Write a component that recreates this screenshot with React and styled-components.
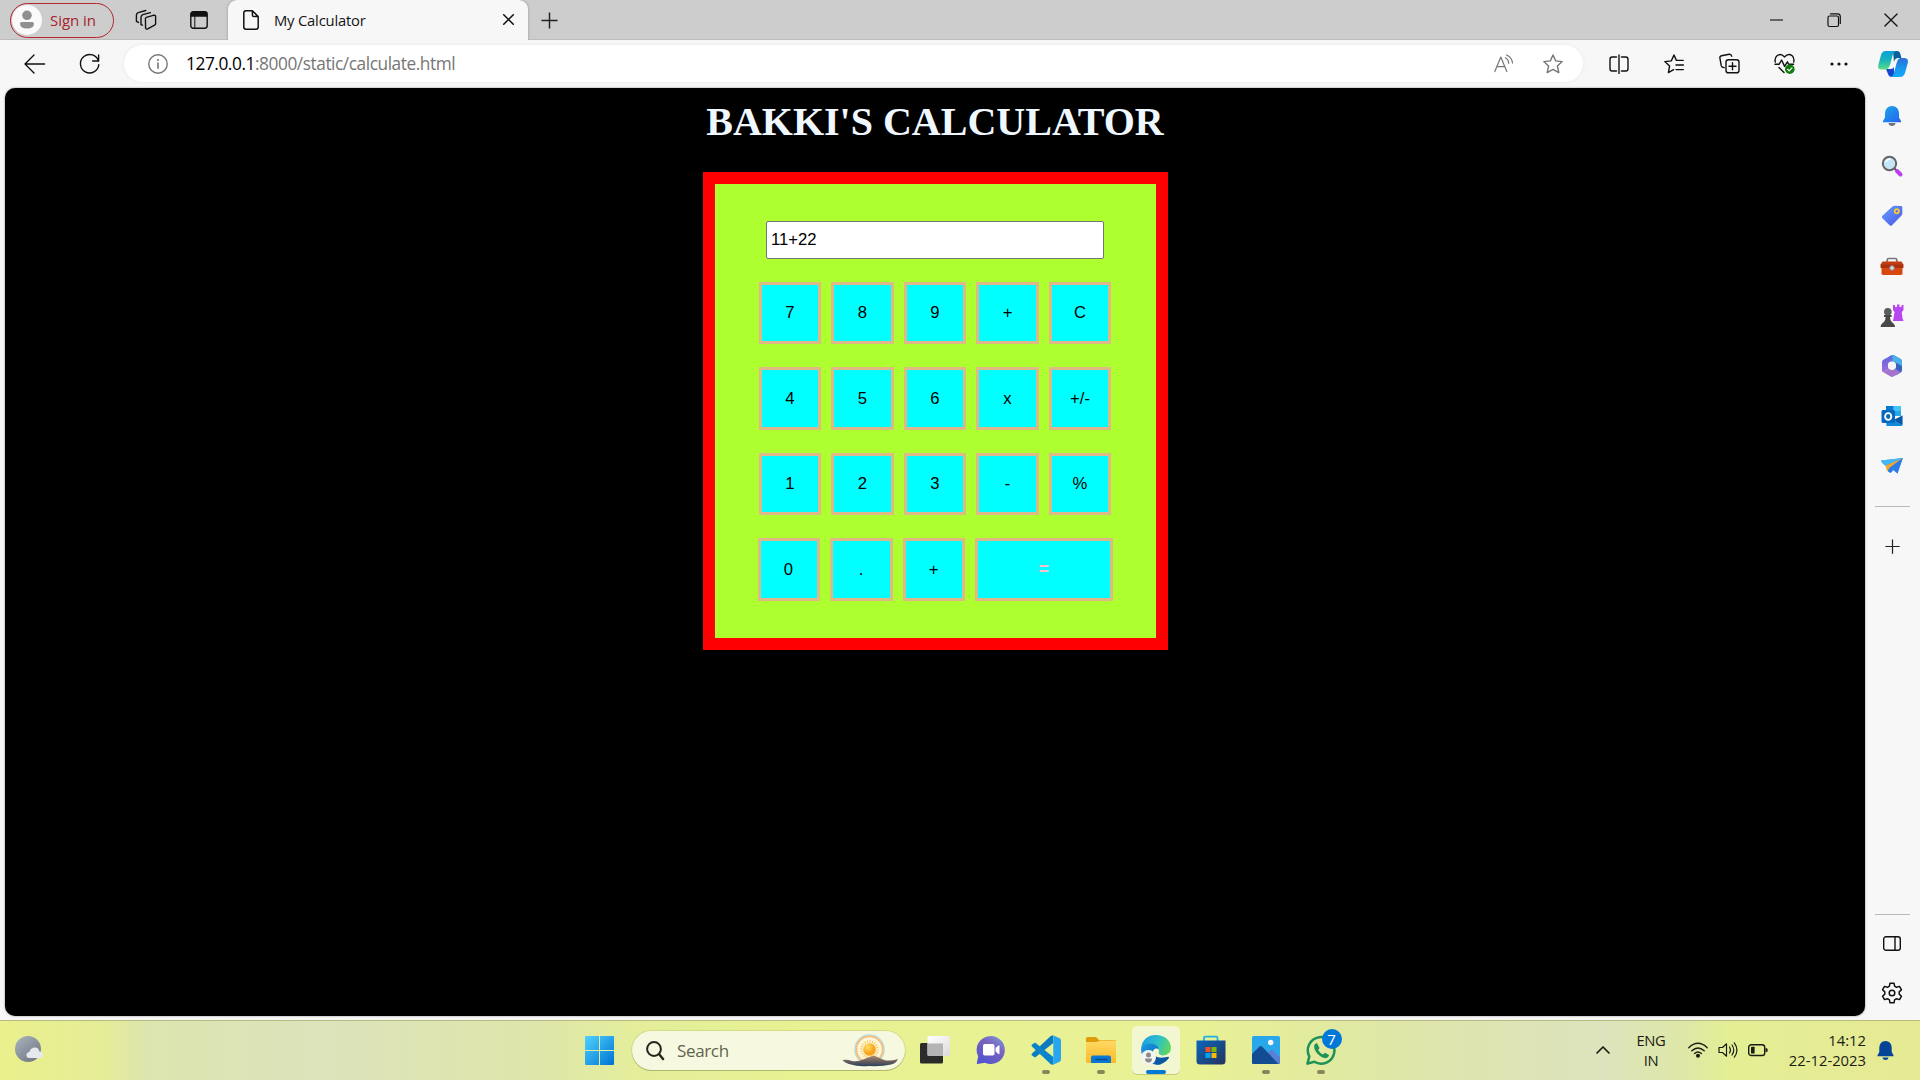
import React, { useState } from "react";
import styled, { createGlobalStyle } from "styled-components";

const GlobalStyle = createGlobalStyle`
  * { box-sizing: border-box; }
  html, body { margin: 0; padding: 0; }
  body { overflow: hidden; background: #f7f7f7; font-family: "Open Sans", "Noto Sans", sans-serif; }
`;

const Desktop = styled.div`
  width: 1920px;
  height: 1080px;
  display: flex;
  flex-direction: column;
  overflow: hidden;
  background: #f7f7f7;
`;

const TitleBar = styled.header`
  flex: none;
  height: 40px;
  display: flex;
  align-items: stretch;
  background: #cdcdcd;
  box-shadow: inset 0 -1px 0 #bdbdbd;
`;

const ProfileButton = styled.button`
  width: 104px;
  height: 35px;
  margin: 2.5px 0 0 10px;
  padding: 0 0 1px 1px;
  display: flex;
  align-items: center;
  gap: 8px;
  border: 1.5px solid #b3262d;
  border-radius: 18px;
  background: transparent;
  color: #a5262c;
  font: 15px "Open Sans", sans-serif;
  letter-spacing: -0.05px;
  white-space: nowrap;
`;

const IconSlot = styled.div`
  flex: none;
  width: ${(p) => p.$w}px;
  margin-left: ${(p) => p.$ml || 0}px;
  display: flex;
  align-items: center;
  justify-content: center;
`;

const Svg = styled.svg`
  display: block;
  flex: none;
  overflow: visible;
`;

const Tab = styled.div`
  width: 300px;
  height: 40px;
  margin-left: 17px;
  padding: 0 13px 1px 15px;
  display: flex;
  align-items: center;
  border-radius: 9px 9px 0 0;
  background: #f7f7f7;
  box-shadow: 0 0 3px rgba(0, 0, 0, 0.28);
  clip-path: inset(0 -4px 0 -4px);
`;

const TabTitle = styled.span`
  flex: 1;
  margin-left: 15px;
  font-size: 14.8px;
  letter-spacing: -0.2px;
  color: #151515;
`;

const WindowControls = styled.div`
  margin-left: auto;
  display: flex;
`;

const Toolbar = styled.nav`
  flex: none;
  height: 48px;
  display: flex;
  align-items: center;
  padding: 0 0 1px 7px;
  background: #f7f7f7;
`;

const AddressBar = styled.div`
  width: 1460px;
  height: 37px;
  margin-left: 7px;
  display: flex;
  align-items: center;
  border-radius: 19px;
  background: #fff;
  box-shadow: 0 0 4px rgba(0, 0, 0, 0.06);
`;

const Url = styled.span`
  flex: 1;
  margin-left: 18px;
  font-size: 17.3px;
  letter-spacing: -0.44px;
  color: #767676;
  white-space: nowrap;
  b { font-weight: 400; color: #000; }
`;

const Body = styled.div`
  flex: 1;
  min-height: 0;
  display: flex;
`;

const Page = styled.main`
  width: 1860px;
  margin: 0 0 4px 5px;
  display: flex;
  flex-direction: column;
  align-items: center;
  border-radius: 10px;
  background: #000;
  box-shadow: 0 0 2px rgba(0, 0, 0, 0.5);
`;

const Heading = styled.h1`
  margin: 11px 0 27px;
  font: bold 40px/46px "Liberation Serif", "Times New Roman", serif;
  color: aliceblue;
`;

const Calculator = styled.section`
  width: 465px;
  height: 478px;
  padding-top: 37px;
  border: 12px solid #f00;
  background: greenyellow;
  display: flex;
  flex-direction: column;
  align-items: center;
`;

const Display = styled.input`
  width: 338px;
  height: 38px;
  margin-bottom: 23px;
  padding: 0 0 0 4px;
  border: 1px solid #767676;
  border-radius: 2px;
  background: #fff;
  color: #000;
  font: 16.67px "Liberation Sans", Arial, sans-serif;
  outline: none;
`;

const KeyPad = styled.div`
  display: grid;
  grid-template-rows: 62px 63px 62px 63px;
  row-gap: 23px;
  justify-items: center;
`;

const KeyRow = styled.div`
  display: grid;
  grid-template-columns: ${(p) => (p.$last ? "62px 63px 62px 138px" : "62px 63px 62px 63px 62px")};
  column-gap: 10px;
`;

const Key = styled.button`
  padding: 0;
  border: 3px solid burlywood;
  background: cyan;
  color: ${(p) => (p.$equals ? "pink" : "#000")};
  font: ${(p) => (p.$equals ? "bold 17.5px" : "normal 16.67px")} "Liberation Sans", Arial, sans-serif;
`;

const Sidebar = styled.aside`
  width: 55px;
  padding: 13px 1px 12px 0;
  display: flex;
  flex-direction: column;
  align-items: center;
`;

const SideItem = styled.div`
  width: 30px;
  height: 30px;
  margin-bottom: ${(p) => (p.$last ? 0 : 20)}px;
  display: flex;
  align-items: center;
  justify-content: center;
`;

const Divider = styled.div`
  width: 35px;
  height: 1px;
  background: #bababa;
  margin: ${(p) => p.$m};
`;

const Taskbar = styled.footer`
  flex: none;
  height: 60px;
  padding-bottom: 1px;
  display: flex;
  align-items: center;
  border-top: 1px solid #b6bc80;
  background: linear-gradient(90deg, #eaf08c 0, #e5ed96 100px, #dde5b0 150px, #dde3bb 320px, #dfe6aa 540px,
    #e4ee9a 640px, #e8f292 800px, #e8f194 1200px, #e1eaa0 1330px, #dfe5ae 1450px, #dde3bd 1600px,
    #dfe8a6 1690px, #e4ef94 1730px, #e6e994 1920px);
`;

const SearchBox = styled.div`
  width: 273px;
  height: 39px;
  margin: 0 4px 0 17.5px;
  padding: 0 7px 0 14px;
  display: flex;
  align-items: center;
  border-radius: 20px;
  background: #f6f9df;
  box-shadow: 0 0 0 1px rgba(150, 165, 90, 0.25), 0 1px 0 rgba(110, 120, 60, 0.4);
  color: #61634f;
  font-size: 17px;
  letter-spacing: -0.35px;
`;

const SearchLabel = styled.span`
  flex: 1;
  margin-left: 13px;
`;

const AppSlot = styled.div`
  position: relative;
  width: 48px;
  height: 48px;
  margin: 0 ${(p) => (p.$first ? 4 : 3.5)}px 0 ${(p) => (p.$first ? 2 : 3.5)}px;
  display: flex;
  align-items: center;
  justify-content: center;
  border-radius: 5px;
  background: ${(p) => (p.$active ? "#f3f7d1" : "transparent")};
  box-shadow: ${(p) => (p.$active ? "0 1px 0 rgba(110,120,60,.3)" : "none")};
  &::after {
    content: "";
    display: ${(p) => (p.$running || p.$active ? "block" : "none")};
    position: absolute;
    bottom: 0;
    left: calc(50% - ${(p) => (p.$active ? 10 : 4)}px);
    width: ${(p) => (p.$active ? 20 : 8)}px;
    height: 4px;
    border-radius: 2px;
    background: ${(p) => (p.$active ? "#0078d4" : "#86885c")};
  }
`;

const Badge = styled.span`
  position: absolute;
  left: 25px;
  top: 3px;
  width: 20px;
  height: 20px;
  border-radius: 50%;
  display: flex;
  align-items: center;
  justify-content: center;
  background: #0078d7;
  color: #fff;
  font-size: 15px;
  line-height: 1;
`;

const Tray = styled.div`
  margin-left: auto;
  height: 100%;
  display: flex;
  align-items: center;
  color: #1b1c14;
`;

const TrayText = styled.div`
  width: ${(p) => p.$w}px;
  margin-left: ${(p) => p.$ml}px;
  text-align: ${(p) => p.$align};
  font-size: 14.8px;
  line-height: 20px;
  letter-spacing: ${(p) => p.$ls || 0}px;
  white-space: nowrap;
`;

const Pic = ({ w, h = w, children, vb, ...rest }) => (
  <Svg width={w} height={h} viewBox={vb || `0 0 ${w} ${h}`} fill="none" {...rest}>{children}</Svg>
);
const line = { stroke: "#111", strokeWidth: 1.4, strokeLinecap: "round", strokeLinejoin: "round" };
const gray = { ...line, stroke: "#767676" };

const Avatar = () => (
  <Pic w={30}>
    <circle cx="15" cy="15" r="15" fill="#fafafa" />
    <circle cx="15" cy="10.3" r="4.8" fill="#909090" />
    <path d="M8 18.6Q8 17 9.6 17H20.4Q22 17 22 18.6Q22 23.6 15 23.6Q8 23.6 8 18.6Z" fill="#909090" />
  </Pic>
);

const Workspaces = () => (
  <Pic w={22} {...line}>
    <path d="M10.4 9.6Q10.6 8.7 11.4 8.4L18.2 6.3Q20.6 5.8 20.6 7.6V14.8Q20.5 15.7 19.6 16.1L12.7 19.9Q10.9 20.6 10.6 18.8Z" />
    <path d="M7.4 16.2L6 15.7V8.3Q6.2 6.3 7.8 5.6L15.4 3.6" />
    <path d="M3.5 13.4L1.4 12.3V6.1Q1.4 4.3 3.2 3.6L10.8 1.5" />
  </Pic>
);

const TabActions = () => (
  <Pic w={18}>
    <rect x=".8" y=".8" width="16.4" height="16.4" rx="2.4" {...line} />
    <path d="M.8 5.8V3Q.8.8 3 .8H15Q17.2.8 17.2 3V5.8Z" fill="#111" />
    <path d="M4.8 5V17" {...line} strokeWidth="1" />
  </Pic>
);

const FileIcon = () => (
  <Pic w={16} h={20} {...line} strokeWidth="1.5">
    <path d="M9.4.8H3Q.8.8.8 3V17Q.8 19.2 3 19.2H13Q15.2 19.2 15.2 17V6.6ZM9.4.8V5Q9.4 6.6 11 6.6H15.2" />
  </Pic>
);

const Cross = ({ s, sw = 1.3 }) => (
  <Pic w={s} vb="0 0 12 12"><path d="M.8.8L11.2 11.2M11.2.8L.8 11.2" {...line} strokeWidth={sw} /></Pic>
);
const Plus = ({ s, sw = 1.3 }) => (
  <Pic w={s} vb="0 0 16 16"><path d="M8 .4V15.6M.4 8H15.6" stroke="#222" strokeWidth={sw} /></Pic>
);

const Back = () => <Pic w={22} h={20} {...line}><path d="M1 10H20.6M10 1L1 10L10 19" /></Pic>;
const Reload = () => <Pic w={21} {...line}><path d="M19.5 8.2A9.2 9.2 0 1 0 19.8 11.6M19.6 2V8H13.6" /></Pic>;
const Info = () => (
  <Pic w={20}>
    <circle cx="10" cy="10" r="9.2" {...gray} />
    <path d="M10 9V14.2" {...gray} strokeWidth="1.6" /><circle cx="10" cy="6" r="1.1" fill="#767676" />
  </Pic>
);
const ReadAloud = () => (
  <Pic w={20} h={19} {...gray} strokeWidth="1.2">
    <path d="M.8 17.6L6.8 3L12.8 17.6M3 12.6H10.6" />
    <path d="M11.4 3.8Q14.4 5.2 14.8 9.2M12.4 1Q17.8 3 18.6 9" />
  </Pic>
);
const Star = () => (
  <Pic w={20} {...gray}><path d="M10 1L12.7 6.9L19.2 7.6L14.4 12L15.8 18.6L10 15.4L4.2 18.6L5.6 12L.8 7.6L7.3 6.9Z" /></Pic>
);
const Split = () => (
  <Pic w={20} {...line}><path d="M7.5 3H3.2Q1 3 1 5.2V14.8Q1 17 3.2 17H7.5M12.5 3H16.8Q19 3 19 5.2V14.8Q19 17 16.8 17H12.5M10 1V19.4" /></Pic>
);
const Favs = () => (
  <Pic w={20} {...line}><path d="M19.2 6.4H12.4L10 1L7.3 6.9L.8 7.6L5.6 12L4.4 18.6L9.6 15.6M12 11H19.4M12 15.6H19.4" /></Pic>
);
const Collections = () => (
  <Pic w={21} {...line}>
    <path d="M5.2 14.6L3.6 14.3Q2.5 13.8 2.3 12.9L.9 5.1Q.6 3.2 2.5 2.7L10.2 1.2Q12.2 1 12.7 3.2" />
    <rect x="7" y="6.8" width="13" height="13" rx="2.4" /><path d="M13.5 9.8V16.8M10 13.3H17" />
  </Pic>
);
const Heart = () => (
  <Pic w={21} {...line}>
    <path d="M1.3 9Q.3 5.2 3 2.7Q7-.3 10.4 3.9Q14.4-.3 18.2 2.7Q20.6 5.2 19.7 9" />
    <path d="M1 11.2H5.2L7.6 7L10.6 13.4L13.4 8.8L14.6 11.2H19.6M5 14.6L10 19.4" />
    <circle cx="15.8" cy="16.2" r="4.8" fill="#107c10" stroke="none" />
    <path d="M13.7 16.4L15.2 17.8L18 14.9" stroke="#fff" strokeWidth="1.2" />
  </Pic>
);
const Dots = () => <Pic w={18} h={4}><circle cx="2" cy="2" r="1.6" fill="#111" /><circle cx="9" cy="2" r="1.6" fill="#111" /><circle cx="16" cy="2" r="1.6" fill="#111" /></Pic>;

const Copilot = () => (
  <Pic w={30} h={28}>
    <defs>
      <linearGradient id="cpA" x1="0" y1="0" x2="0" y2="1"><stop offset="0" stopColor="#0a9fdc" /><stop offset=".5" stopColor="#17b5b9" /><stop offset="1" stopColor="#5ddc88" /></linearGradient>
      <linearGradient id="cpB" x1="0" y1="0" x2="0" y2="1"><stop offset="0" stopColor="#2b6fd8" /><stop offset=".6" stopColor="#159bf0" /><stop offset="1" stopColor="#13a9f7" /></linearGradient>
    </defs>
    <path d="M15 1H19Q21.6 1 22.4 4L23.4 8H20Q17 8 16 12Z" fill="#0a5f9c" />
    <path d="M8 19H13Q15 19 15.6 17L17 27H14Q11 27 10 24Z" fill="#1746d1" />
    <path d="M7.500 1H18Q15.600 2 14.700 5L12.300 14Q10.800 19.500 7 19.500H3.500Q-.6 19.500.2 15.500L3 5Q4.300 1 7.500 1Z" fill="url(#cpA)" />
    <path d="M22 8H26.500Q30.600 8.300 29.900 12.500L27 23Q25.600 27 22.200 27H12.500Q15.200 26 16 23L18.600 13Q19.600 9 22 8Z" fill="url(#cpB)" />
  </Pic>
);
const BellBlue = () => (
  <Pic w={20} h={22}>
    <defs><linearGradient id="bell" x1="0" y1="0" x2="1" y2="1"><stop offset="0" stopColor="#1fa9dd" /><stop offset=".5" stopColor="#1f85f0" /><stop offset="1" stopColor="#2a63e8" /></linearGradient></defs>
    <path d="M6.400 18H13.600Q13 21 10 21Q7 21 6.400 18Z" fill="#6d7480" />
    <path d="M10 1Q16.500 1.300 17 8V12.500L19 16V17.200H1V16L3 12.500V8Q3.500 1.300 10 1Z" fill="url(#bell)" />
  </Pic>
);
const Loupe = () => (
  <Pic w={22}>
    <path d="M13.500 13.500L16 16" stroke="#555" strokeWidth="2" /><path d="M16 16L19.500 19.500" stroke="#bd3df0" strokeWidth="4" strokeLinecap="round" />
    <circle cx="8.500" cy="8.500" r="6.700" fill="#c5e6fa" stroke="#646464" strokeWidth="2" />
    <path d="M4.600 7Q6 4 9.600 4" stroke="#fff" strokeWidth="1.400" />
  </Pic>
);
const Tag = () => (
  <Pic w={22}>
    <defs><linearGradient id="tag" x1="0" y1="0" x2="1" y2="1"><stop offset="0" stopColor="#6aa0ff" /><stop offset="1" stopColor="#4455e8" /></linearGradient></defs>
    <path d="M11.500 1.500Q12.300.8 13.500.8L20 1Q21.300 1 21.300 2.400V8.400Q21.300 9.600 20.500 10.400L11 20.200Q9.800 21.300 8.600 20.200L1.400 13.300Q.2 12 1.400 10.800Z" fill="url(#tag)" />
    <circle cx="15.800" cy="6.200" r="2.100" stroke="#ffc928" strokeWidth="1.700" />
  </Pic>
);
const Toolbox = () => (
  <Pic w={24} h={20}>
    <path d="M7.200 6V4Q7.200 2.500 8.700 2.500H15.300Q16.800 2.500 16.800 4V6" stroke="#777" strokeWidth="1.700" />
    <rect x="1.500" y="11" width="21" height="8" rx="1.400" fill="#d9480f" /><path d="M2.500 5.500H21.500L23.300 8.500V11.500H.7V8.500Z" fill="#c43d10" />
    <path d="M.7 8.500H23.300V12H.7Z" fill="#a93210" /><circle cx="12" cy="12" r="2.300" fill="#d8d8d8" stroke="#8b8b8b" />
  </Pic>
);
const Chess = () => (
  <Pic w={24}>
    <path d="M13 1H15V3H17V.600H19.500V3H21.500V1H23.500V6L21.800 8L22.400 14L23.600 17H13L14.600 8L13 6Z" fill="#b847f0" />
    <circle cx="7.800" cy="7.700" r="3.800" fill="#5c5c5c" />
    <path d="M4 11H11.600V13H10Q10 17 13.500 19.500Q15 20.500 15 23H.6Q.6 20.500 2.100 19.500Q5.600 17 5.600 13H4Z" fill="#484848" />
  </Pic>
);
const M365 = () => (
  <Pic w={22} h={24}>
    <defs><linearGradient id="m3" x1="0" y1="0" x2="0" y2="1"><stop offset="0" stopColor="#5a6ae0" /><stop offset="1" stopColor="#a66ad9" /></linearGradient></defs>
    <path d="M10.500 1.200Q11.700.6 13 1.200L19.700 5Q21 5.800 21 7.300V16.200Q21 17.700 19.700 18.500L15 21.300L14 15.500L15 10L7 8Z" fill="#3763bd" />
    <path d="M8 2.600L10.500 1.200Q11.700.6 13 1.200L19.700 5Q21 5.800 21 7.300V12L14.500 8.600L8 8Z" fill="#48b1ea" />
    <path d="M10.500 1.200L2.300 5.700Q1 6.400 1 8V16.200Q1 17.500 2.300 18.300L7.800 14.500L7.500 9.500Q8 7.500 11.500 7.600V2.600Z" fill="url(#m3)" />
    <path d="M2.300 18.300L10 22.700Q11 23.300 12.500 22.600L19.800 18.400L14.400 14.600Q11 17 7.600 14.400Z" fill="#a374cd" />
    <circle cx="11" cy="11.700" r="4.100" fill="#f7f7f7" />
  </Pic>
);
const Outlook = () => (
  <Pic w={22}>
    <path d="M5 2Q5 1 6 1H19Q20 1 20 2V11H5Z" fill="#28a8ea" /><path d="M5 1H12.500V6H5Z" fill="#0a78cf" /><path d="M12.500 1H20V6H12.500Z" fill="#45c3f5" />
    <path d="M4.500 10.500L13 16L21.400 10.500V19.500Q21.400 21 20 21H5.500Z" fill="#1688d8" /><path d="M21.400 10.500V20L13 14.800Z" fill="#0a57a5" />
    <rect x=".5" y="5" width="13.500" height="13" rx="1.500" fill="#0868bd" /><ellipse cx="7.200" cy="11.500" rx="3.100" ry="3.400" stroke="#fff" strokeWidth="1.900" />
  </Pic>
);
const Plane = () => (
  <Pic w={24} h={20}>
    <path d="M1 4.500L22.800 2L17.500 17.400L13.600 14.200L10.500 17L8.400 12.500L1.800 6.500Z" fill="#399cf0" />
    <path d="M22.800 2L7.700 11L8.200 15.800L10.600 17L13.200 13.600L17.500 17.400Z" fill="#2d7ce5" />
    <path d="M22.500 2L5.600 9.600L7 15.500L9.600 11.800Z" fill="#f2a72c" /><path d="M1 4.500L22.500 2L5.600 9.600Z" fill="#45b8f7" />
  </Pic>
);
const PanelIcon = () => <Pic w={18} h={15} {...line}><rect x=".7" y=".7" width="16.600" height="13.600" rx="2.300" /><path d="M12 1V14" /></Pic>;
const Gear = () => (
  <Pic w={22} {...line} strokeWidth="1.5">
    <path d="M9 1.200H13L13.600 4.200L15.500 5.300L18.500 4.400L20.500 7.800L18.200 9.900V12.100L20.500 14.200L18.500 17.600L15.500 16.700L13.600 17.800L13 20.800H9L8.400 17.800L6.500 16.700L3.500 17.600L1.500 14.200L3.800 12.100V9.900L1.500 7.800L3.500 4.400L6.500 5.300L8.400 4.200Z" />
    <circle cx="11" cy="11" r="2.800" />
  </Pic>
);

const Weather = () => (
  <Pic w={30}>
    <defs><linearGradient id="moon" x1="0" y1="0" x2=".8" y2="1"><stop stopColor="#abb5bd" /><stop offset="1" stopColor="#6f7884" /></linearGradient></defs>
    <circle cx="14" cy="14" r="13" fill="url(#moon)" />
    <path d="M15.300 23Q12.400 23 12.400 20Q12.600 17.300 15.400 17Q16.600 12.700 21 12.600Q24.600 12.700 25.400 16.400Q29 16.800 29 19.800Q28.600 23 25.400 23Z" fill="#e6e9ee" />
  </Pic>
);
const Windows = () => (
  <Pic w={29}>
    <defs><linearGradient id="win" x1="0" y1="0" x2="1" y2="1"><stop stopColor="#4fd3ff" /><stop offset="1" stopColor="#0072d2" /></linearGradient></defs>
    <path d="M1 0H14V14H0V1Q0 0 1 0ZM15 0H28Q29 0 29 1V14H15ZM0 15H14V29H1Q0 29 0 28ZM15 15H29V28Q29 29 28 29H15Z" fill="url(#win)" />
  </Pic>
);
const SearchGlass = () => <Pic w={18} h={19}><circle cx="8" cy="8" r="6.900" stroke="#24261e" strokeWidth="2" /><path d="M13 13L17 18" stroke="#24261e" strokeWidth="2.400" strokeLinecap="round" /></Pic>;
const SunHills = () => (
  <Pic w={56} h={34}>
    <defs>
      <linearGradient id="hill" x1="0" y1="0" x2="0" y2="1"><stop stopColor="#b18872" /><stop offset=".5" stopColor="#6e625e" /><stop offset="1" stopColor="#29405c" /></linearGradient>
      <radialGradient id="sun" cx=".35" cy=".3"><stop stopColor="#ffe169" /><stop offset="1" stopColor="#f7a51e" /></radialGradient>
    </defs>
    <circle cx="27.500" cy="16.500" r="14.500" stroke="#b7dce0" strokeWidth="1.500" /><circle cx="27.500" cy="16.500" r="13.200" stroke="#f6be7b" strokeWidth="1.800" fill="#fdf5da" />
    <circle cx="27.500" cy="16.500" r="8" stroke="#f8c64c" strokeWidth="2.400" strokeDasharray="1 1.500" /><circle cx="27.500" cy="16.500" r="6.300" fill="url(#sun)" />
    <path d="M.5 27Q5 26 10 28Q16 29 21 26.500Q27 24 32 22.500Q39 26 44 27.500Q50 28 56 26Q54 30.500 49 31.500Q40 33.600 27 33Q16 34 9 31.500Q3 30 .5 27Z" fill="url(#hill)" />
  </Pic>
);
const TaskView = () => (
  <Pic w={30}>
    <defs><linearGradient id="tv" x1="0" y1="0" x2="1" y2="1"><stop stopColor="#fff" /><stop offset="1" stopColor="#dcdcdc" /></linearGradient></defs>
    <rect x="0" y="8" width="23" height="20.500" rx="1.500" fill="#2b2b2b" /><rect x="7.500" y="1" width="22.500" height="20" rx="1.500" fill="url(#tv)" /><path d="M7.500 8.500H23V21H9Q7.500 21 7.500 19.500Z" fill="#b4b4b4" />
  </Pic>
);
const Chat = () => (
  <Pic w={30}>
    <defs><linearGradient id="chat" x1="1" y1="0" x2=".3" y2="1"><stop stopColor="#81a0e2" /><stop offset=".45" stopColor="#7862bd" /><stop offset="1" stopColor="#5555cf" /></linearGradient></defs>
    <path d="M15 1A14 14 0 1 1 9 27.700L1.300 29Q.6 29 .8 28L2.200 21.500A14 14 0 0 1 15 1Z" fill="url(#chat)" />
    <rect x="7" y="9" width="11.500" height="11.500" rx="1.800" fill="#fff" /><path d="M19.500 13L22.500 10.500Q23.500 10 23.500 11V18.500Q23.500 19.500 22.500 19L19.500 16.500Z" fill="#fff" />
  </Pic>
);
const Code = () => (
  <Pic w={30}>
    <path d="M22 .5L22.300 8L6 21L4 22.500L.8 20.300Q0 19.500 1 18.500L19.500 1.300Q20.600.2 22 .5Z" fill="#0b7bbf" />
    <path d="M4 7.500L22.300 22V29.500Q20.500 30 19.500 29L1 11.500Q0 10.500.8 9.700Z" fill="#0a84cb" />
    <path d="M22 .3L28.700 3.300Q30 4 30 5.500V24.500Q30 26 28.700 26.700L22 29.700Q22.300 29 22.300 28V2Q22.300 1 22 .3Z" fill="#28a6f0" />
  </Pic>
);
const Folder = () => (
  <Pic w={30} h={28}>
    <defs><linearGradient id="fold" x1="0" y1="0" x2="0" y2="1"><stop stopColor="#ffd965" /><stop offset="1" stopColor="#fbb924" /></linearGradient></defs>
    <path d="M0 2.500Q0 1 1.500 1H10L13 4H28.500Q30 4 30 5.500V9H0Z" fill="#df9b09" />
    <path d="M0 6H11L14 4.500H28.800Q30 4.500 30 6V27H1.200Q0 27 0 25.500Z" fill="url(#fold)" />
    <path d="M5 27V21.500Q5 19.500 7 19.500H23Q25 19.500 25 21.500V27Z" fill="#0878d2" /><path d="M9 23.500H21.500" stroke="#044d90" strokeWidth="1.400" />
  </Pic>
);
const Edge = () => (
  <Pic w={30}>
    <defs>
      <linearGradient id="eg1" x1="0" y1=".3" x2="1" y2=".6"><stop stopColor="#1c9fe5" /><stop offset=".55" stopColor="#2fc2c5" /><stop offset="1" stopColor="#63d85b" /></linearGradient>
      <linearGradient id="eg2" x1="0" y1="0" x2="1" y2="1"><stop stopColor="#179de5" /><stop offset="1" stopColor="#0b5cad" /></linearGradient>
    </defs>
    <path d="M0 13.500Q2 0 15 0Q28 .5 30 12Q30 20 22 20.500Q16.500 20 18 16.500Q18 10 10 9.500Q3 9 0 13.500Z" fill="url(#eg1)" />
    <path d="M0 14Q2 8.500 9 8.500Q17 9 18 14.500Q13 11.500 11.800 17.500Q11.500 26 21 29Q14 31 8 27.600Q0 23 0 14Z" fill="url(#eg2)" />
    <path d="M11.700 17Q13 22.500 20 22.800Q25 22.500 27.500 21.800Q28.600 22.300 27.500 23.500Q23 29.500 16 29.800Q11 26 11.700 17Z" fill="#0c57a4" />
    <circle cx="7.500" cy="22.500" r="7.500" fill="#f4f4f0" /><circle cx="7.500" cy="20" r="2.500" fill="#8b8b8b" /><path d="M4 23.500H11Q11 27.500 7.500 27.500Q4 27.500 4 23.500Z" fill="#8b8b8b" />
  </Pic>
);
const Store = () => (
  <Pic w={30}>
    <defs><linearGradient id="st" x1="0" y1="0" x2="1" y2="1"><stop stopColor="#0867be" /><stop offset="1" stopColor="#26335c" /></linearGradient></defs>
    <path d="M8 7V2.700Q8 1.600 9 1.600H20.500Q21.500 1.600 21.500 2.700V7" stroke="#1fb1e8" strokeWidth="1.800" />
    <path d="M.5 5.500H29.500V26Q29.500 29.500 26 29.500H4Q.5 29.500.5 26Z" fill="url(#st)" />
    <path d="M9.500 12H14.500V17H9.500Z" fill="#f25022" /><path d="M15.500 12H20.500V17H15.500Z" fill="#7fba00" /><path d="M9.500 18H14.500V23H9.500Z" fill="#00a4ef" /><path d="M15.500 18H20.500V23H15.500Z" fill="#ffb900" />
  </Pic>
);
const Photos = () => (
  <Pic w={28}>
    <rect width="28" height="28" rx="1.500" fill="#28a8ea" /><path d="M14 19L18.500 14Q19.500 13 20.600 14L28 21V26.500Q28 28 26.500 28H20Z" fill="#5a80d6" />
    <path d="M0 18L7.500 10.500Q8.800 9.300 10 10.500L26.500 28H1.500Q0 28 0 26.500Z" fill="#124c92" /><circle cx="18.700" cy="6.500" r="2.700" fill="#f5f7fa" />
  </Pic>
);
const WhatsApp = () => (
  <Pic w={30}>
    <path d="M1.500 28.600L3.300 21.500A13.300 13.300 0 1 1 8.300 26.800Z" stroke="#1c9158" strokeWidth="2.500" strokeLinejoin="round" />
    <path d="M8.200 10.500Q9.200 8 11 8.300L13.500 13L12.200 15Q14 18.500 17 19.500L18.800 17.800L23 20Q22.600 22.700 19.500 23.200Q15.500 23 11.500 18.800Q7.800 14.500 8.200 10.500Z" fill="#1c9158" />
  </Pic>
);
const dark = { stroke: "#1b1c14", strokeWidth: 1.4, strokeLinecap: "round", strokeLinejoin: "round" };
const Chevron = () => <Pic w={14} h={8} {...dark} strokeWidth="1.700"><path d="M1 7L7 1L13 7" /></Pic>;
const Wifi = () => (
  <Pic w={20} h={16} {...dark}><path d="M.8 5.700Q10-3 19.200 5.700M3.800 8.800Q10 3.200 16.200 8.800M6.600 11.500Q10 8.600 13.400 11.500" /><circle cx="10" cy="13.800" r="1.300" fill="#1b1c14" /></Pic>
);
const Volume = () => (
  <Pic w={20} h={16} {...dark} strokeWidth="1.200"><path d="M1 5.500H4.500L8.500 1.800V14.200L4.500 10.500H1ZM11.500 5Q13.500 8 11.500 11M14 3Q17.500 8 14 13M16.300.8Q21.600 8 16.300 15.200" /></Pic>
);
const Battery = () => (
  <Pic w={20} h={12}><rect x=".7" y=".7" width="16" height="10.800" rx="2.600" {...dark} /><rect x="3" y="2.700" width="3.600" height="6.800" rx=".6" fill="#1b1c14" /><path d="M17.500 4L19.600 4.800V7.400L17.500 8.200Z" fill="#1b1c14" /></Pic>
);
const TrayBell = () => (
  <Pic w={17} h={19}><path d="M8.500 0Q14.300.3 14.700 6.500V11L16.500 14.200V15.200H.5V14.200L2.300 11V6.500Q2.700.3 8.500 0ZM5.500 16.400H11.500Q11 19 8.500 19Q6 19 5.500 16.400Z" fill="#044396" /></Pic>
);

const rows = [
  ["7", "8", "9", "+", "C"],
  ["4", "5", "6", "x", "+/-"],
  ["1", "2", "3", "-", "%"],
  ["0", ".", "+", "="],
];
const sideIcons = [BellBlue, Loupe, Tag, Toolbox, Chess, M365, Outlook, Plane];
const tools = [Split, Favs, Collections, Heart, Dots];
const apps = [
  { icon: TaskView }, { icon: Chat }, { icon: Code, running: true }, { icon: Folder, running: true },
  { icon: Edge, active: true }, { icon: Store }, { icon: Photos, running: true }, { icon: WhatsApp, running: true, badge: "7" },
];

export default function App() {
  const [value, setValue] = useState("11+22");
  return (
    <>
      <GlobalStyle />
      <Desktop>
        <TitleBar>
          <ProfileButton><Avatar />Sign in</ProfileButton>
          <IconSlot $w={24} $ml={20}><Workspaces /></IconSlot>
          <IconSlot $w={24} $ml={29}><TabActions /></IconSlot>
          <Tab>
            <FileIcon />
            <TabTitle>My Calculator</TabTitle>
            <IconSlot $w={14}><Cross s={11} sw={1.7} /></IconSlot>
          </Tab>
          <IconSlot $w={24} $ml={9.5}><Plus s={17} sw={1.4} /></IconSlot>
          <WindowControls>
            <IconSlot $w={57}><Pic w={13} h={2}><path d="M0 1H13" stroke="#111" strokeWidth="1.1" /></Pic></IconSlot>
            <IconSlot $w={57}>
              <Pic w={14}><rect x="1" y="3" width="10.500" height="10.500" rx="1.500" {...line} strokeWidth="1.200" /><path d="M3.500.8H10.500Q13.300.8 13.300 3.600V10.500" {...line} strokeWidth="1.200" /></Pic>
            </IconSlot>
            <IconSlot $w={58}><Cross s={14} sw={1.1} /></IconSlot>
          </WindowControls>
        </TitleBar>
        <Toolbar>
          <IconSlot $w={55}><Back /></IconSlot>
          <IconSlot $w={55}><Reload /></IconSlot>
          <AddressBar>
            <IconSlot $w={20} $ml={24}><Info /></IconSlot>
            <Url><b>127.0.0.1</b>:8000/static/calculate.html</Url>
            <IconSlot $w={22}><ReadAloud /></IconSlot>
            <IconSlot $w={22} $ml={27}><Star /></IconSlot>
            <IconSlot $w={19} />
          </AddressBar>
          {tools.map((Icon, i) => <IconSlot key={i} $w={i ? 55.2 : 55} $ml={i ? 0 : 8}><Icon /></IconSlot>)}
          <IconSlot $w={55} $ml={-2}><Copilot /></IconSlot>
        </Toolbar>
        <Body>
          <Page>
            <Heading>BAKKI'S CALCULATOR</Heading>
            <Calculator>
              <Display value={value} onChange={(e) => setValue(e.target.value)} />
              <KeyPad>
                {rows.map((row, r) => (
                  <KeyRow key={r} $last={r === 3}>
                    {row.map((k) => (
                      <Key key={k} $equals={k === "="} onClick={() => setValue(k === "C" ? "" : value + k)}>{k}</Key>
                    ))}
                  </KeyRow>
                ))}
              </KeyPad>
            </Calculator>
          </Page>
          <Sidebar>
            {sideIcons.map((Icon, i) => <SideItem key={i} $last={i === 7}><Icon /></SideItem>)}
            <Divider $m="25px 0 24px" />
            <SideItem $last><Plus s={15} sw={1.3} /></SideItem>
            <Divider $m="auto 0 13px" />
            <SideItem><PanelIcon /></SideItem>
            <SideItem $last><Gear /></SideItem>
          </Sidebar>
        </Body>
        <Taskbar>
          <IconSlot $w={30} $ml={14}><Weather /></IconSlot>
          <IconSlot $w={30} $ml={540.5}><Windows /></IconSlot>
          <SearchBox>
            <SearchGlass />
            <SearchLabel>Search</SearchLabel>
            <SunHills />
          </SearchBox>
          {apps.map(({ icon: Icon, running, active, badge }, i) => (
            <AppSlot key={i} $first={i === 0} $running={running} $active={active}>
              <Icon />
              {badge && <Badge>{badge}</Badge>}
            </AppSlot>
          ))}
          <Tray>
            <Chevron />
            <TrayText $w={40} $ml={21} $align="center" $ls={-0.4}>ENG<br />IN</TrayText>
            <IconSlot $w={20} $ml={17}><Wifi /></IconSlot>
            <IconSlot $w={20} $ml={10}><Volume /></IconSlot>
            <IconSlot $w={20} $ml={10}><Battery /></IconSlot>
            <TrayText $w={90} $ml={8} $align="right" $ls={0}>14:12<br />22-12-2023</TrayText>
            <IconSlot $w={17} $ml={11}><TrayBell /></IconSlot>
            <IconSlot $w={26} />
          </Tray>
        </Taskbar>
      </Desktop>
    </>
  );
}
